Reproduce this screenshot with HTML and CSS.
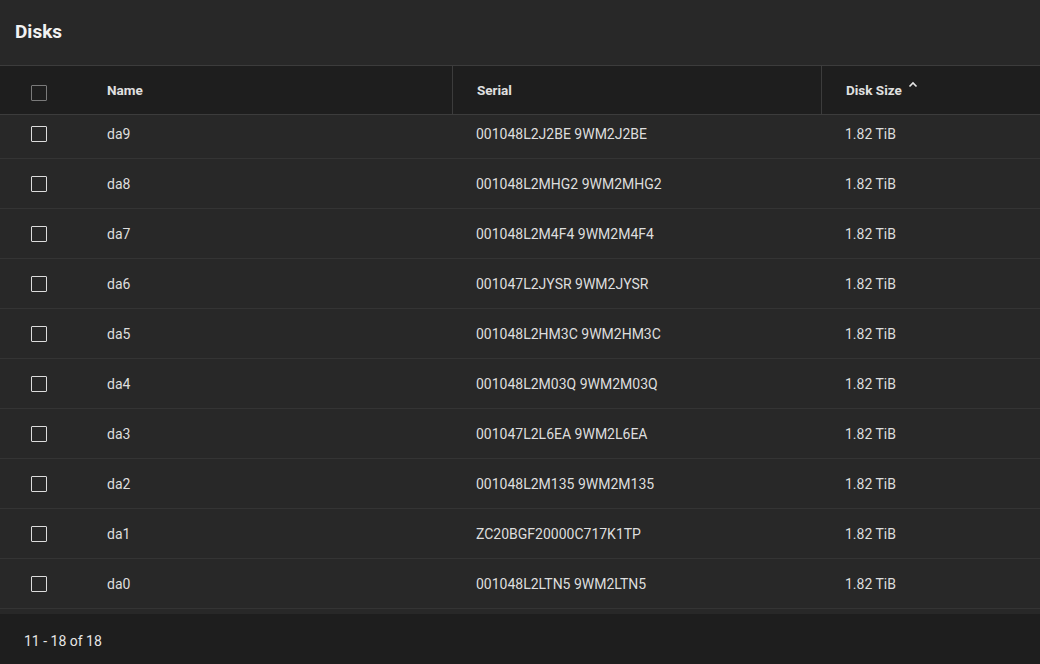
FILE: index.html
```html
<!DOCTYPE html>
<html lang="en">
  <head>
    <meta charset="UTF-8" />
    <meta name="viewport" content="width=device-width, initial-scale=1.0" />
    <title>Disks</title>
    <link rel="stylesheet" href="styles.css">
  </head>
  <body>
    <div class="card">
      <div class="card-title">Disks</div>

      <div class="table-head row-grid">
        <div class="cell cell-check"><span class="checkbox checkbox-head"></span></div>
        <div class="cell">Name</div>
        <div class="cell cell-divided">Serial</div>
        <div class="cell cell-divided">
          Disk Size
          <svg class="sort-icon" width="10" height="7" viewBox="0 0 10 7">
            <path d="M1.5 5.5 L5 2 L8.5 5.5" fill="none" stroke="#e6e6e6" stroke-width="1.6" />
          </svg>
        </div>
      </div>

      <div class="table-body">
        <div class="rows">
          <div class="row row-grid">
            <div class="cell cell-check"><span class="checkbox"></span></div>
            <div class="cell">da9</div>
            <div class="cell">001048L2J2BE 9WM2J2BE</div>
            <div class="cell">1.82 TiB</div>
          </div>
          <div class="row row-grid">
            <div class="cell cell-check"><span class="checkbox"></span></div>
            <div class="cell">da8</div>
            <div class="cell">001048L2MHG2 9WM2MHG2</div>
            <div class="cell">1.82 TiB</div>
          </div>
          <div class="row row-grid">
            <div class="cell cell-check"><span class="checkbox"></span></div>
            <div class="cell">da7</div>
            <div class="cell">001048L2M4F4 9WM2M4F4</div>
            <div class="cell">1.82 TiB</div>
          </div>
          <div class="row row-grid">
            <div class="cell cell-check"><span class="checkbox"></span></div>
            <div class="cell">da6</div>
            <div class="cell">001047L2JYSR 9WM2JYSR</div>
            <div class="cell">1.82 TiB</div>
          </div>
          <div class="row row-grid">
            <div class="cell cell-check"><span class="checkbox"></span></div>
            <div class="cell">da5</div>
            <div class="cell">001048L2HM3C 9WM2HM3C</div>
            <div class="cell">1.82 TiB</div>
          </div>
          <div class="row row-grid">
            <div class="cell cell-check"><span class="checkbox"></span></div>
            <div class="cell">da4</div>
            <div class="cell">001048L2M03Q 9WM2M03Q</div>
            <div class="cell">1.82 TiB</div>
          </div>
          <div class="row row-grid">
            <div class="cell cell-check"><span class="checkbox"></span></div>
            <div class="cell">da3</div>
            <div class="cell">001047L2L6EA 9WM2L6EA</div>
            <div class="cell">1.82 TiB</div>
          </div>
          <div class="row row-grid">
            <div class="cell cell-check"><span class="checkbox"></span></div>
            <div class="cell">da2</div>
            <div class="cell">001048L2M135 9WM2M135</div>
            <div class="cell">1.82 TiB</div>
          </div>
          <div class="row row-grid">
            <div class="cell cell-check"><span class="checkbox"></span></div>
            <div class="cell">da1</div>
            <div class="cell">ZC20BGF20000C717K1TP</div>
            <div class="cell">1.82 TiB</div>
          </div>
          <div class="row row-grid">
            <div class="cell cell-check"><span class="checkbox"></span></div>
            <div class="cell">da0</div>
            <div class="cell">001048L2LTN5 9WM2LTN5</div>
            <div class="cell">1.82 TiB</div>
          </div>
        </div>
      </div>

      <div class="table-footer">11 - 18 of 18</div>
    </div>
  </body>
</html>
```

FILE: styles.css
```css
* {
  margin: 0;
  padding: 0;
  box-sizing: border-box;
}

body {
  background-color: #282828;
  font-family: Roboto, "Liberation Sans", Arial, sans-serif;
  color: #e0e0e0;
  height: 100vh;
  overflow: hidden;
}

.card {
  display: flex;
  flex-direction: column;
  height: 100vh;
}

.card-title {
  height: 66px;
  padding: 0 15px 2px;
  display: flex;
  align-items: center;
  font-size: 19px;
  font-weight: 700;
  color: #f2f2f2;
  background-color: #282828;
  border-bottom: 1px solid #3c3c3c;
}

.row-grid {
  display: grid;
  grid-template-columns: 83px 369px 369px 1fr;
}

.cell {
  display: flex;
  align-items: center;
  padding-left: 24px;
  font-size: 14px;
}

.cell-check {
  padding-left: 31px;
}

.table-head {
  height: 49px;
  background-color: #1e1e1e;
  border-bottom: 1px solid #3c3c3c;
}

.table-head .cell {
  font-size: 13.5px;
  font-weight: 700;
  color: #e0e0e0;
}

.table-head .cell-check {
  padding-top: 5px;
}

.cell-divided {
  border-left: 1px solid #3c3c3c;
}

.sort-icon {
  margin-left: 6px;
  margin-bottom: 12px;
}

.table-body {
  flex: 1;
  overflow: hidden;
  background-color: #282828;
}

.rows {
  margin-top: -6px;
}

.row {
  height: 50px;
  border-bottom: 1px solid #343434;
  color: #dedede;
}

.checkbox {
  display: block;
  width: 16px;
  height: 16px;
  border: 1.5px solid #dcdcdc;
  border-radius: 1px;
}

.checkbox-head {
  border-color: #7a7a7a;
}

.table-footer {
  height: 50px;
  flex-shrink: 0;
  display: flex;
  align-items: center;
  padding: 4px 0 0 24px;
  font-size: 14px;
  color: #e6e6e6;
  background-color: #1e1e1e;
}
```
